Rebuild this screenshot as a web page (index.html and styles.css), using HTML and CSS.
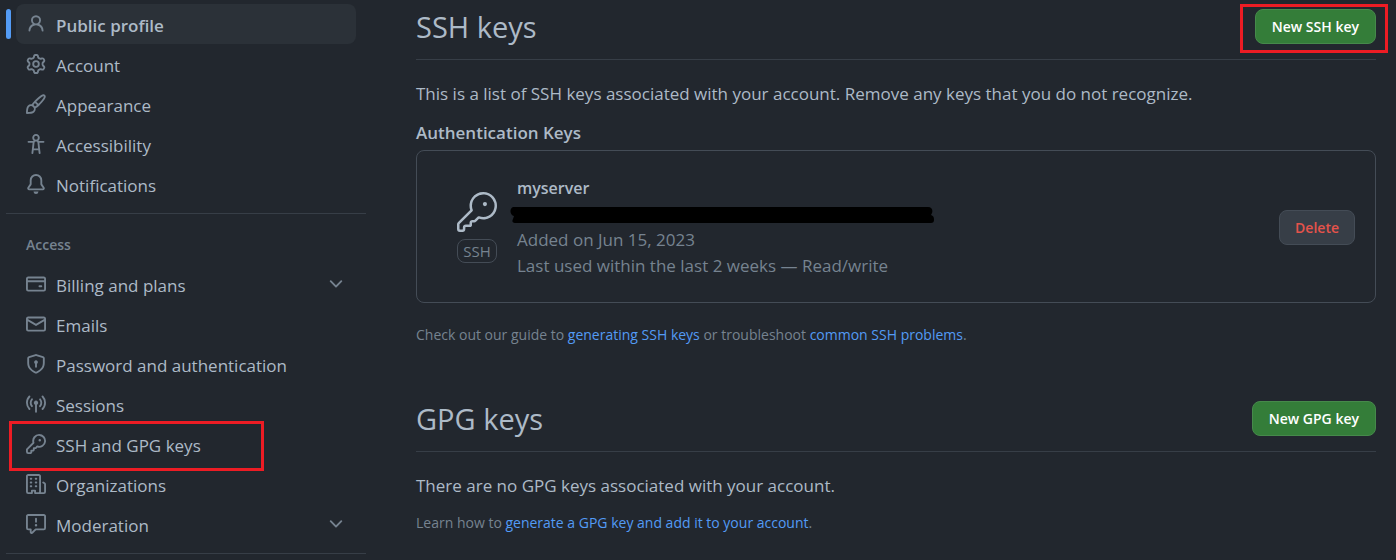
FILE: index.html
```html
<!DOCTYPE html>
<html lang="en">
<head>
<meta charset="utf-8">
<meta name="viewport" content="width=device-width, initial-scale=1">
<title>SSH and GPG keys</title>
<link rel="stylesheet" href="styles.css">
</head>
<body>
<div class="shell">
  <nav class="sidebar" aria-label="Settings">
    <ul class="nav-list">
      <li><a class="nav-item is-current" href="#profile" aria-current="page">
        <svg class="icon" viewBox="0 0 16 16" aria-hidden="true"><path d="M10.561 8.073a6.005 6.005 0 0 1 3.432 5.142.75.75 0 1 1-1.498.07 4.5 4.5 0 0 0-8.99 0 .75.75 0 0 1-1.498-.07 6.004 6.004 0 0 1 3.431-5.142 3.999 3.999 0 1 1 5.123 0ZM10.5 5a2.5 2.5 0 1 0-5 0 2.5 2.5 0 0 0 5 0Z"/></svg>
        <span class="nav-label">Public profile</span></a></li>
      <li><a class="nav-item" href="#account">
        <svg class="icon" viewBox="0 0 16 16" aria-hidden="true"><path d="M8 0a8.2 8.2 0 0 1 .701.031C9.444.095 9.99.645 10.16 1.29l.288 1.107c.018.066.079.158.212.224.231.114.454.243.668.386.123.082.233.09.299.071l1.103-.303c.644-.176 1.392.021 1.82.63.27.385.506.792.704 1.218.315.675.111 1.422-.364 1.891l-.814.806c-.049.048-.098.147-.088.294.016.257.016.515 0 .772-.01.147.038.246.088.294l.814.806c.475.469.679 1.216.364 1.891a7.977 7.977 0 0 1-.704 1.217c-.428.61-1.176.807-1.82.63l-1.102-.302c-.067-.019-.177-.011-.3.071a5.909 5.909 0 0 1-.668.386c-.133.066-.194.158-.211.224l-.29 1.106c-.168.646-.715 1.196-1.458 1.26a8.006 8.006 0 0 1-1.402 0c-.743-.064-1.289-.614-1.458-1.26l-.289-1.106c-.018-.066-.079-.158-.212-.224a5.738 5.738 0 0 1-.668-.386c-.123-.082-.233-.09-.299-.071l-1.103.303c-.644.176-1.392-.021-1.82-.63a8.12 8.12 0 0 1-.704-1.218c-.315-.675-.111-1.422.363-1.891l.815-.806c.05-.048.098-.147.088-.294a6.214 6.214 0 0 1 0-.772c.01-.147-.038-.246-.088-.294l-.815-.806C.635 6.045.431 5.298.746 4.623a7.92 7.92 0 0 1 .704-1.217c.428-.61 1.176-.807 1.82-.63l1.102.302c.067.019.177.011.3-.071.214-.143.437-.272.668-.386.133-.066.194-.158.211-.224l.29-1.106C6.009.645 6.556.095 7.299.03 7.53.01 7.764 0 8 0Zm-.571 1.525c-.036.003-.108.036-.137.146l-.289 1.105c-.147.561-.549.967-.998 1.189-.173.086-.34.183-.5.29-.417.278-.97.423-1.529.27l-1.103-.303c-.109-.03-.175.016-.195.045-.22.312-.412.644-.573.99-.014.031-.021.11.059.19l.815.806c.411.406.562.957.53 1.456a4.709 4.709 0 0 0 0 .582c.032.499-.119 1.05-.53 1.456l-.815.806c-.081.08-.073.159-.059.19.162.346.353.677.573.989.02.03.085.076.195.046l1.102-.303c.56-.153 1.113-.008 1.53.27.161.107.328.204.501.29.447.222.85.629.997 1.189l.289 1.105c.029.109.101.143.137.146a6.6 6.6 0 0 0 1.142 0c.036-.003.108-.036.137-.146l.289-1.105c.147-.561.549-.967.998-1.189.173-.086.34-.183.5-.29.417-.278.97-.423 1.529-.27l1.103.303c.109.029.175-.016.195-.045.22-.313.411-.644.573-.99.014-.031.021-.11-.059-.19l-.815-.806c-.411-.406-.562-.957-.53-1.456a4.709 4.709 0 0 0 0-.582c-.032-.499.119-1.05.53-1.456l.815-.806c.081-.08.073-.159.059-.19a6.464 6.464 0 0 0-.573-.989c-.02-.03-.085-.076-.195-.046l-1.102.303c-.56.153-1.113.008-1.53-.27a4.44 4.44 0 0 0-.501-.29c-.447-.222-.85-.629-.997-1.189l-.289-1.105c-.029-.11-.101-.143-.137-.146a6.6 6.6 0 0 0-1.142 0ZM11 8a3 3 0 1 1-6 0 3 3 0 0 1 6 0ZM9.5 8a1.5 1.5 0 1 0-3.001.001A1.5 1.5 0 0 0 9.5 8Z"/></svg>
        <span class="nav-label">Account</span></a></li>
      <li><a class="nav-item" href="#appearance">
        <svg class="icon" viewBox="0 0 16 16" aria-hidden="true"><path d="M11.134 1.535c.7-.509 1.416-.942 2.076-1.155.649-.21 1.463-.267 2.069.34.603.601.568 1.411.368 2.07-.202.668-.624 1.39-1.125 2.096-1.011 1.424-2.496 2.987-3.775 4.249-1.098 1.084-2.132 1.839-3.04 2.3a3.744 3.744 0 0 1-1.055 3.217c-.431.431-1.065.691-1.657.861-.614.177-1.294.287-1.914.357A21.151 21.151 0 0 1 .797 16H.743l.007-.75H.749L.742 16a.75.75 0 0 1-.743-.742l.743-.008-.742.007v-.054a21.25 21.25 0 0 1 .13-2.284c.067-.647.187-1.287.358-1.914.17-.591.43-1.226.86-1.657a3.746 3.746 0 0 1 3.227-1.054c.466-.893 1.225-1.907 2.314-2.982 1.271-1.255 2.833-2.75 4.246-3.777ZM1.62 13.089c-.051.464-.086.929-.104 1.395.466-.018.932-.053 1.396-.104a10.511 10.511 0 0 0 1.668-.309c.526-.151.856-.325 1.011-.48a2.25 2.25 0 1 0-3.182-3.182c-.155.155-.329.485-.48 1.01a10.515 10.515 0 0 0-.309 1.67Zm10.396-10.34c-1.224.89-2.605 2.189-3.822 3.384l1.718 1.718c1.21-1.205 2.51-2.597 3.387-3.833.47-.662.78-1.227.912-1.662.134-.444.032-.551.009-.575h-.001V1.78c-.014-.014-.113-.113-.548.027-.432.14-.995.462-1.655.942Zm-4.832 7.266-.001.001a9.859 9.859 0 0 0 1.63-1.142L7.155 7.216a9.7 9.7 0 0 0-1.161 1.607c.482.302.889.71 1.19 1.192Z"/></svg>
        <span class="nav-label">Appearance</span></a></li>
      <li><a class="nav-item" href="#accessibility">
        <svg class="icon" viewBox="0 0 16 16" aria-hidden="true"><path d="M9.923 5.302c.063.063.122.129.178.198H14A.75.75 0 0 1 14 7h-3.3l.578 5.163.362 2.997a.75.75 0 0 1-1.49.18L9.868 13H6.132l-.282 2.34a.75.75 0 0 1-1.49-.18l.362-2.997L5.3 7H2a.75.75 0 0 1 0-1.5h3.9a2.54 2.54 0 0 1 .176-.198 3 3 0 1 1 3.847 0ZM9.2 7.073h-.001a1.206 1.206 0 0 0-2.398 0L6.305 11.5h3.39ZM9.5 3a1.5 1.5 0 1 0-3.001.001A1.5 1.5 0 0 0 9.5 3Z"/></svg>
        <span class="nav-label">Accessibility</span></a></li>
      <li><a class="nav-item" href="#notifications">
        <svg class="icon" viewBox="0 0 16 16" aria-hidden="true"><path d="M8 16a2 2 0 0 0 1.985-1.75c.017-.137-.097-.25-.235-.25h-3.5c-.138 0-.252.113-.235.25A2 2 0 0 0 8 16ZM3 5a5 5 0 0 1 10 0v2.947c0 .05.015.098.042.139l1.703 2.555A1.519 1.519 0 0 1 13.482 13H2.518a1.516 1.516 0 0 1-1.263-2.36l1.703-2.554A.255.255 0 0 0 3 7.947Zm5-3.5A3.5 3.5 0 0 0 4.5 5v2.947c0 .346-.102.683-.294.97l-1.703 2.556a.017.017 0 0 0-.003.01l.001.006c0 .002.002.004.004.006l.006.004.007.001h10.964l.007-.001.006-.004.004-.006.001-.007a.017.017 0 0 0-.003-.01l-1.703-2.554a1.745 1.745 0 0 1-.294-.97V5A3.5 3.5 0 0 0 8 1.5Z"/></svg>
        <span class="nav-label">Notifications</span></a></li>
    </ul>
    <section class="nav-group">
      <h2 class="nav-heading">Access</h2>
      <ul class="nav-list">
        <li><button class="nav-item" type="button" aria-expanded="false">
          <svg class="icon" viewBox="0 0 16 16" aria-hidden="true"><path d="M10.75 9a.75.75 0 0 0 0 1.5h1.5a.75.75 0 0 0 0-1.5h-1.5Z"/><path d="M0 3.75C0 2.784.784 2 1.75 2h12.5c.966 0 1.75.784 1.75 1.75v8.5A1.75 1.75 0 0 1 14.25 14H1.75A1.75 1.75 0 0 1 0 12.25ZM14.5 6.5h-13v5.75c0 .138.112.25.25.25h12.5a.25.25 0 0 0 .25-.25Zm0-2.75a.25.25 0 0 0-.25-.25H1.75a.25.25 0 0 0-.25.25V5h13Z"/></svg>
          <span class="nav-label">Billing and plans</span>
          <svg class="icon" viewBox="0 0 16 16" aria-hidden="true"><path d="M12.78 5.22a.749.749 0 0 1 0 1.06l-4.25 4.25a.749.749 0 0 1-1.06 0L3.22 6.28a.749.749 0 1 1 1.06-1.06L8 8.939l3.72-3.719a.749.749 0 0 1 1.06 0Z"/></svg></button></li>
        <li><a class="nav-item" href="#emails">
          <svg class="icon" viewBox="0 0 16 16" aria-hidden="true"><path d="M1.75 2h12.5c.966 0 1.75.784 1.75 1.75v8.5A1.75 1.75 0 0 1 14.25 14H1.75A1.75 1.75 0 0 1 0 12.25v-8.5C0 2.784.784 2 1.75 2ZM1.5 12.251c0 .138.112.25.25.25h12.5a.25.25 0 0 0 .25-.25V5.809L8.38 9.397a.75.75 0 0 1-.76 0L1.5 5.809v6.442Zm13-8.181v-.32a.25.25 0 0 0-.25-.25H1.75a.25.25 0 0 0-.25.25v.32L8 7.88Z"/></svg>
          <span class="nav-label">Emails</span></a></li>
        <li><a class="nav-item" href="#security">
          <svg class="icon" viewBox="0 0 16 16" aria-hidden="true"><path d="m8.533.133 5.25 1.68A1.75 1.75 0 0 1 15 3.48V7c0 1.566-.32 3.182-1.303 4.682-.983 1.498-2.585 2.813-5.032 3.855a1.697 1.697 0 0 1-1.33 0c-2.447-1.042-4.049-2.357-5.032-3.855C1.32 10.182 1 8.566 1 7V3.48a1.755 1.755 0 0 1 1.217-1.667l5.25-1.68a1.748 1.748 0 0 1 1.066 0Zm-.61 1.429.001.001-5.25 1.68a.251.251 0 0 0-.174.237V7c0 1.36.275 2.666 1.057 3.859.784 1.194 2.121 2.342 4.366 3.298a.196.196 0 0 0 .154 0c2.245-.957 3.582-2.103 4.366-3.297C13.225 9.666 13.5 8.358 13.5 7V3.48a.25.25 0 0 0-.174-.238l-5.25-1.68a.25.25 0 0 0-.153 0ZM9.5 6.5c0 .536-.286 1.032-.75 1.3v2.45a.75.75 0 0 1-1.5 0V7.8A1.5 1.5 0 1 1 9.5 6.5Z"/></svg>
          <span class="nav-label">Password and authentication</span></a></li>
        <li><a class="nav-item" href="#sessions">
          <svg class="icon" viewBox="0 0 16 16" aria-hidden="true"><path d="M8.75 8.582v5.668a.75.75 0 0 1-1.5 0V8.582a1.75 1.75 0 1 1 1.5 0Zm3.983-7.125a.75.75 0 0 1 1.06.026A7.976 7.976 0 0 1 16 7c0 2.139-.84 4.083-2.207 5.517a.75.75 0 1 1-1.086-1.034A6.474 6.474 0 0 0 14.5 7a6.474 6.474 0 0 0-1.793-4.483.75.75 0 0 1 .026-1.06Zm-9.466 0c.3.286.312.76.026 1.06A6.474 6.474 0 0 0 1.5 7a6.47 6.47 0 0 0 1.793 4.483.75.75 0 0 1-1.086 1.034A7.973 7.973 0 0 1 0 7c0-2.139.84-4.083 2.207-5.517a.75.75 0 0 1 1.06-.026Zm8.556 2.321A4.988 4.988 0 0 1 13 7a4.988 4.988 0 0 1-1.177 3.222.75.75 0 1 1-1.146-.967A3.487 3.487 0 0 0 11.5 7c0-.86-.309-1.645-.823-2.255a.75.75 0 0 1 1.146-.967Zm-6.492.958A3.48 3.48 0 0 0 4.5 7a3.48 3.48 0 0 0 .823 2.255.75.75 0 0 1-1.146.967A4.981 4.981 0 0 1 3 7a4.982 4.982 0 0 1 1.188-3.236.75.75 0 1 1 1.143.972Z"/></svg>
          <span class="nav-label">Sessions</span></a></li>
        <li class="marked"><a class="nav-item" href="#keys">
          <svg class="icon" viewBox="0 0 16 16" aria-hidden="true"><path d="M10.5 0a5.499 5.499 0 1 1-1.288 10.848l-.932.932a.749.749 0 0 1-.53.22H7v.75a.749.749 0 0 1-.22.53l-.5.5a.749.749 0 0 1-.53.22H5v.75a.749.749 0 0 1-.22.53l-.5.5a.749.749 0 0 1-.53.22h-2A1.75 1.75 0 0 1 0 14.25v-2c0-.199.079-.389.22-.53l4.932-4.932A5.5 5.5 0 0 1 10.5 0Zm-4 5.5c-.001.431.069.86.205 1.269a.75.75 0 0 1-.181.768L1.5 12.56v1.69c0 .138.112.25.25.25h1.69l.06-.06v-1.19a.75.75 0 0 1 .75-.75h1.19l.06-.06v-1.19a.75.75 0 0 1 .75-.75h1.19l1.023-1.025a.75.75 0 0 1 .768-.18A4 4 0 1 0 6.5 5.5ZM11 6a1 1 0 1 1 0-2 1 1 0 0 1 0 2Z"/></svg>
          <span class="nav-label">SSH and GPG keys</span></a><span class="highlight highlight-nav"></span></li>
        <li><a class="nav-item" href="#organizations">
          <svg class="icon" viewBox="0 0 16 16" aria-hidden="true"><path d="M1.75 16A1.75 1.75 0 0 1 0 14.25V1.75C0 .784.784 0 1.75 0h8.5C11.216 0 12 .784 12 1.75v12.5c0 .085-.006.168-.018.25h2.268a.25.25 0 0 0 .25-.25V8.285a.25.25 0 0 0-.111-.208l-1.055-.703a.749.749 0 1 1 .832-1.248l1.055.703c.487.325.779.871.779 1.456v5.965A1.75 1.75 0 0 1 14.25 16h-3.5a.766.766 0 0 1-.197-.026c-.099.017-.2.026-.303.026h-3a.75.75 0 0 1-.75-.75V14h-1v1.25a.75.75 0 0 1-.75.75Zm-.25-1.75c0 .138.112.25.25.25H4v-1.25a.75.75 0 0 1 .75-.75h2.5a.75.75 0 0 1 .75.75v1.25h2.25a.25.25 0 0 0 .25-.25V1.75a.25.25 0 0 0-.25-.25h-8.5a.25.25 0 0 0-.25.25ZM3.75 6h.5a.75.75 0 0 1 0 1.5h-.5a.75.75 0 0 1 0-1.5ZM3 3.75A.75.75 0 0 1 3.75 3h.5a.75.75 0 0 1 0 1.5h-.5A.75.75 0 0 1 3 3.75Zm4 3A.75.75 0 0 1 7.75 6h.5a.75.75 0 0 1 0 1.5h-.5A.75.75 0 0 1 7 6.75ZM7.75 3h.5a.75.75 0 0 1 0 1.5h-.5a.75.75 0 0 1 0-1.5ZM3 9.75A.75.75 0 0 1 3.75 9h.5a.75.75 0 0 1 0 1.5h-.5A.75.75 0 0 1 3 9.75ZM7.75 9h.5a.75.75 0 0 1 0 1.5h-.5a.75.75 0 0 1 0-1.5Z"/></svg>
          <span class="nav-label">Organizations</span></a></li>
        <li><button class="nav-item" type="button" aria-expanded="false">
          <svg class="icon" viewBox="0 0 16 16" aria-hidden="true"><path d="M0 1.75C0 .784.784 0 1.75 0h12.5C15.216 0 16 .784 16 1.75v9.5A1.75 1.75 0 0 1 14.25 13H8.06l-2.573 2.573A1.458 1.458 0 0 1 3 14.543V13H1.75A1.75 1.75 0 0 1 0 11.25Zm1.75-.25a.25.25 0 0 0-.25.25v9.5c0 .138.112.25.25.25h2a.75.75 0 0 1 .75.75v2.19l2.72-2.72a.749.749 0 0 1 .53-.22h6.5a.25.25 0 0 0 .25-.25v-9.5a.25.25 0 0 0-.25-.25Zm7 2.25v2.5a.75.75 0 0 1-1.5 0v-2.5a.75.75 0 0 1 1.5 0ZM9 9a1 1 0 1 1-2 0 1 1 0 0 1 2 0Z"/></svg>
          <span class="nav-label">Moderation</span>
          <svg class="icon" viewBox="0 0 16 16" aria-hidden="true"><path d="M12.78 5.22a.749.749 0 0 1 0 1.06l-4.25 4.25a.749.749 0 0 1-1.06 0L3.22 6.28a.749.749 0 1 1 1.06-1.06L8 8.939l3.72-3.719a.749.749 0 0 1 1.06 0Z"/></svg></button></li>
      </ul>
    </section>
  </nav>

  <main class="content">
    <section class="key-section">
      <header class="section-head">
        <h1 class="section-title">SSH keys</h1>
        <div class="marked">
          <button class="btn btn-primary" type="button">New SSH key</button>
          <span class="highlight highlight-button"></span>
        </div>
      </header>
      <p class="lead">This is a list of SSH keys associated with your account. Remove any keys that you do not recognize.</p>
      <h2 class="list-title">Authentication Keys</h2>
      <article class="key-card">
        <div class="key-type">
          <svg class="key-icon" viewBox="0 0 24 24" aria-hidden="true"><path d="M16.75 8.5a1.25 1.25 0 1 0 0-2.5 1.25 1.25 0 0 0 0 2.5Z"/><path d="M15.75 0a8.25 8.25 0 1 1-2.541 16.101l-1.636 1.636a1.744 1.744 0 0 1-1.237.513H9.25a.25.25 0 0 0-.25.25v1.448a.876.876 0 0 1-.256.619l-.214.213a.75.75 0 0 1-.545.22H5.25a.25.25 0 0 0-.25.25v1A1.75 1.75 0 0 1 3.25 24h-1.5A1.75 1.75 0 0 1 0 22.25v-2.836c0-.464.185-.908.513-1.236l7.386-7.388A8.249 8.249 0 0 1 15.75 0ZM9 8.25a6.733 6.733 0 0 0 .463 2.462.75.75 0 0 1-.168.804l-7.722 7.721a.25.25 0 0 0-.073.177v2.836c0 .138.112.25.25.25h1.5a.25.25 0 0 0 .25-.25v-1c0-.966.784-1.75 1.75-1.75H7.5v-1c0-.966.784-1.75 1.75-1.75h1.086a.25.25 0 0 0 .177-.073l1.971-1.972a.75.75 0 0 1 .804-.168A6.75 6.75 0 1 0 9 8.25Z"/></svg>
          <span class="badge">SSH</span>
        </div>
        <div class="key-info">
          <h3 class="key-name">myserver</h3>
          <svg class="redaction" viewBox="0 0 424 16" aria-hidden="true"><path d="M3 0h415c4 0 5 3 4 6l-1 2c3 1 3 3 3 5s-1 3-3 3H5c-3 0-3-2-2-4l1-3C0 8-1 2 3 0Z"/></svg>
          <p class="key-meta">Added on Jun 15, 2023</p>
          <p class="key-meta">Last used within the last 2 weeks — Read/write</p>
        </div>
        <button class="btn btn-danger" type="button">Delete</button>
      </article>
      <p class="note">Check out our guide to <a class="link" href="#generating">generating SSH keys</a> or troubleshoot <a class="link" href="#problems">common SSH problems</a>.</p>
    </section>

    <section class="key-section">
      <header class="section-head">
        <h1 class="section-title">GPG keys</h1>
        <button class="btn btn-primary" type="button">New GPG key</button>
      </header>
      <p class="lead">There are no GPG keys associated with your account.</p>
      <p class="note">Learn how to <a class="link" href="#gpg">generate a GPG key and add it to your account</a>.</p>
    </section>
  </main>
</div>
</body>
</html>
```
FILE: styles.css
```css
* {
  box-sizing: border-box;
}

body {
  margin: 0;
  background: #22272e;
  color: #adbac7;
  font-family: "Open Sans", "Noto Sans", sans-serif;
  font-size: 17px;
  line-height: 26px;
}

h1, h2, h3, p, ul {
  margin: 0;
  padding: 0;
}

ul {
  list-style: none;
}

.shell {
  display: flex;
  gap: 50px;
  padding: 4px 20px 0 6px;
}

/* Sidebar */

.sidebar {
  flex: 0 0 360px;
}

.nav-list {
  padding: 0 10px;
}

.nav-item {
  position: relative;
  display: flex;
  align-items: center;
  gap: 10px;
  width: 100%;
  height: 40px;
  padding: 0 10px;
  border: 0;
  border-radius: 8px;
  background: none;
  color: inherit;
  font: inherit;
  text-align: left;
  text-decoration: none;
  cursor: pointer;
}

.nav-item.is-current {
  background: #2b3138;
  font-weight: 600;
}

.nav-item.is-current::before {
  content: "";
  position: absolute;
  top: 5px;
  left: -10px;
  width: 5px;
  height: 30px;
  border-radius: 3px;
  background: #539bf5;
}

.nav-label {
  flex: 1;
  padding-top: 4px;
}

.icon {
  flex: none;
  width: 20px;
  height: 20px;
  fill: #768390;
}

.nav-group {
  margin-top: 9px;
  padding-bottom: 9px;
  border-top: 1px solid #373e47;
  border-bottom: 1px solid #373e47;
}

.nav-heading {
  padding: 18px 20px 6px;
  color: #768390;
  font-size: 14px;
  font-weight: 600;
}

/* Markers laid over a control */

.marked {
  position: relative;
}

.highlight {
  position: absolute;
  border: 3px solid #ed1c24;
  pointer-events: none;
}

.highlight-nav {
  inset: -3px 92px -7px -7px;
}

.highlight-button {
  inset: -5px -12px -9px -15px;
}

/* Content */

.content {
  flex: 1;
  min-width: 0;
}

.key-section + .key-section {
  margin-top: 48px;
}

.section-head {
  display: flex;
  align-items: center;
  justify-content: space-between;
  padding-bottom: 10px;
  border-bottom: 1px solid #373e47;
}

.section-title {
  font-size: 29px;
  font-weight: 400;
  line-height: 45px;
}

.lead {
  margin-top: 21px;
}

.list-title {
  margin-top: 13px;
  font-size: 17px;
  font-weight: 600;
}

.key-card {
  display: flex;
  align-items: center;
  gap: 20px;
  margin-top: 4px;
  padding: 24px 20px 23px 40px;
  border: 1px solid #444c56;
  border-radius: 8px;
}

.key-type {
  display: flex;
  flex-direction: column;
  align-items: center;
  gap: 7px;
}

.key-icon {
  width: 40px;
  height: 40px;
  fill: #adbac7;
}

.badge {
  width: 40px;
  border: 1px solid #444c56;
  border-radius: 8px;
  color: #768390;
  font-size: 15px;
  line-height: 22px;
  text-align: center;
}

.key-info {
  flex: 1;
}

.key-name {
  font-size: 16px;
  font-weight: 600;
}

.redaction {
  display: block;
  width: 424px;
  height: 16px;
  margin: 6px 0 4px -7px;
  fill: #000;
}

.key-meta {
  color: #768390;
}

.btn {
  display: block;
  height: 35px;
  padding: 0 15px;
  border: 1px solid;
  border-radius: 8px;
  font-family: inherit;
  font-size: 14px;
  font-weight: 600;
  white-space: nowrap;
  cursor: pointer;
}

.btn-primary {
  padding: 0 16px;
  border-color: #46894b;
  background: #347d39;
  color: #fff;
}

.btn-danger {
  border-color: #444c56;
  background: #373e47;
  color: #e5534b;
}

.note {
  margin-top: 19px;
  color: #768390;
  font-size: 14px;
}

.lead + .note {
  margin-top: 11px;
}

.link {
  color: #539bf5;
  text-decoration: none;
}
```
